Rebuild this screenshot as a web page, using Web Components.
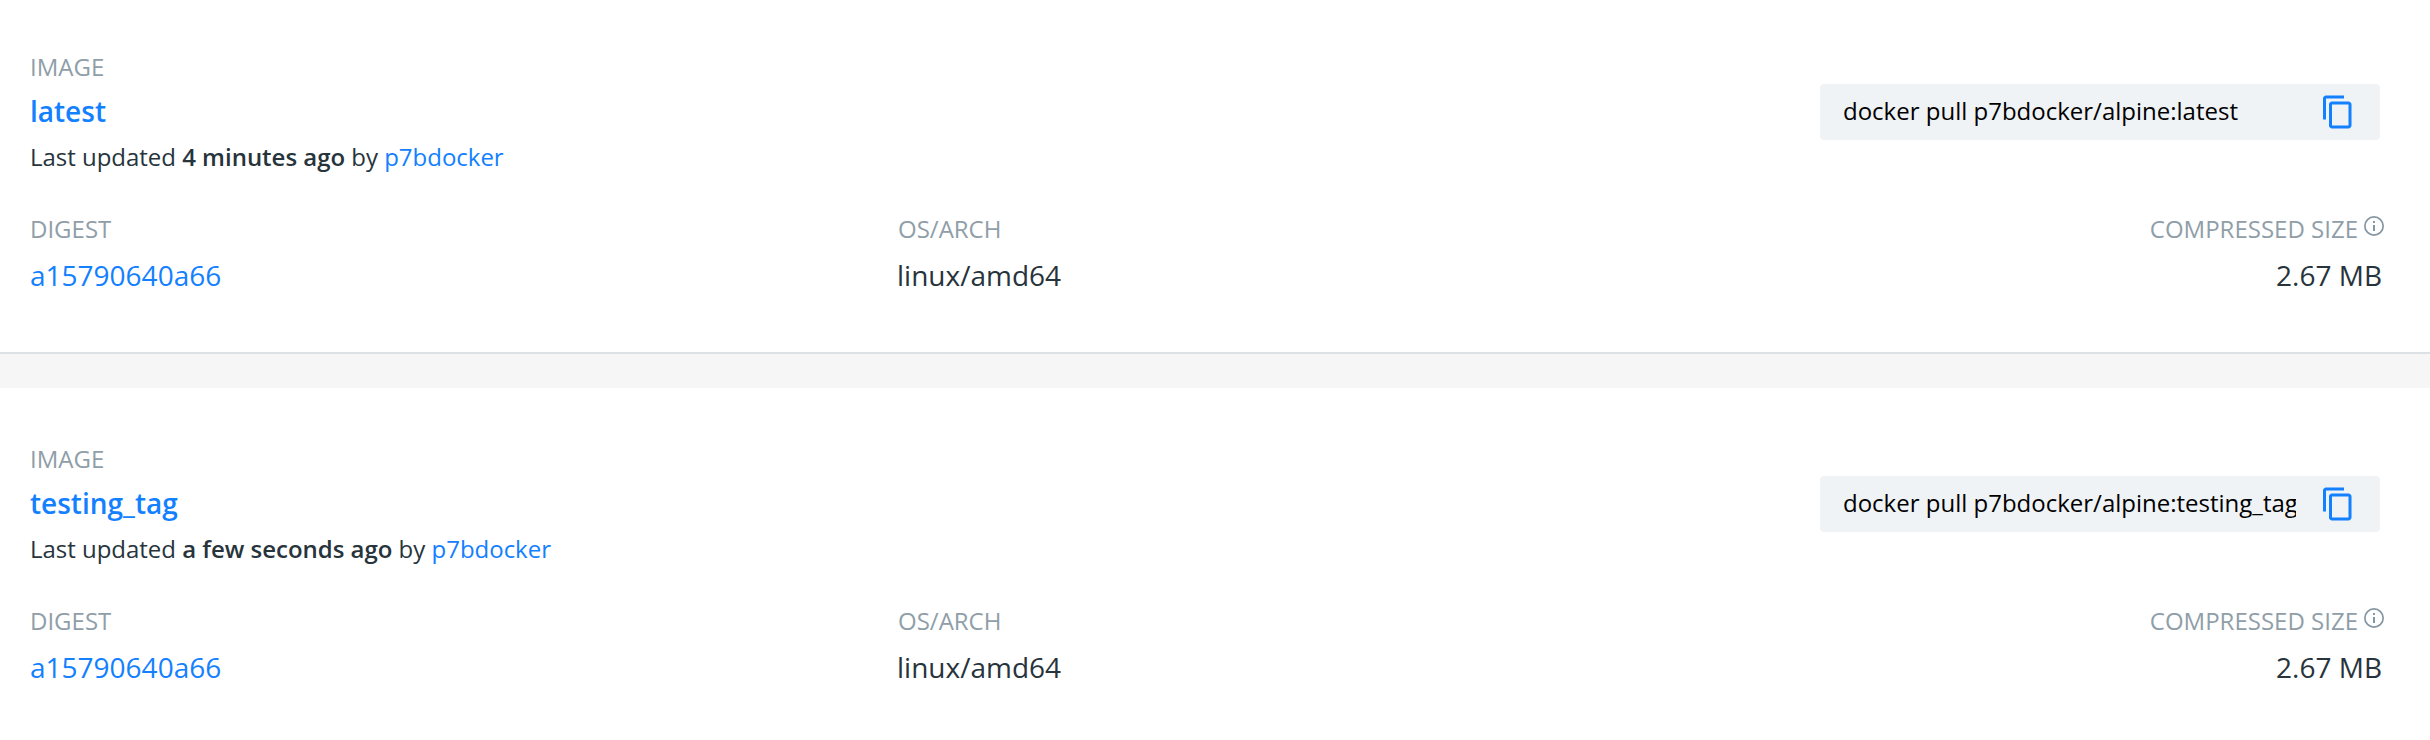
<!DOCTYPE html>
<html lang="en"><head><meta charset="utf-8"><title>Tags</title>
<style>body{margin:0;background:#fff;font-family:"Open Sans",sans-serif;color:#27343c}</style></head><body>
<tag-list></tag-list>
<template id="card"><style>
:host{display:block;background:#fff;box-sizing:border-box;height:354px;padding:49px 48px 0 30px;border-bottom:2px solid #dce1e6;color:#27343c;font-size:24px;line-height:36px}
:host([last]){border:0;height:352px;padding-top:53px}
.top{display:flex;justify-content:space-between}
.label{font-size:24px;color:#8f9ea8;line-height:36px}
.name{font-size:28px;font-weight:600;color:#1380ff;line-height:40px;margin-top:6px}
.upd{margin-top:8px;line-height:36px;letter-spacing:-.02px}
b{font-weight:600} a{color:#1380ff}
.grid{display:grid;grid-template-columns:868px 1fr auto;margin-top:36px}
.val{font-size:28px;line-height:40px;margin-top:8px}
.os{margin-left:-1px}
.r{text-align:right}
.size{display:flex}
.size svg{display:block;margin:3px -4px 0 4px}
</style>
<div class="top"><div><div class="label">IMAGE</div><div class="name"><slot name="name"></slot></div><div class="upd">Last updated <b><slot name="when"></slot></b> by <a>p7bdocker</a></div></div><pull-box><slot name="cmd"></slot></pull-box></div>
<div class="grid"><div><div class="label">DIGEST</div><div class="val"><a>a15790640a66</a></div></div><div><div class="label">OS/ARCH</div><div class="val os">linux/amd64</div></div><div class="r"><div class="label size">COMPRESSED SIZE<svg width="24" height="24" viewBox="0 0 24 24"><path fill="#8396a3" d="M11 17h2v-6h-2v6zm1-15a10 10 0 100 20 10 10 0 000-20zm0 18.3a8.3 8.3 0 110-16.6 8.3 8.3 0 010 16.6zM11 9h2V7h-2z"/></svg></div><div class="val">2.67 MB</div></div></div>
</template>
<template id="pull"><style>
:host{display:flex;box-sizing:border-box;width:560px;height:56px;margin:35px 2px 0 0;background:#eff3f6;border-radius:4px;padding:9px 23px 0;color:#000;font-size:24px;line-height:36px}
.t{width:453px;height:36px;overflow:hidden;white-space:nowrap}svg{margin:1px 0 0 24px;flex:none}
</style><div class="t"><slot></slot></div><svg width="36" height="36" viewBox="0 0 24 24"><path fill="#1380ff" d="M16 1H4c-1.1 0-2 .9-2 2v14h2V3h12V1zm3 4H8c-1.1 0-2 .9-2 2v14c0 1.1.9 2 2 2h11c1.1 0 2-.9 2-2V7c0-1.1-.9-2-2-2zm0 16H8V7h11v14z"/></svg></template>
<template id="list"><style>:host{display:flex;flex-direction:column;gap:34px;background:#f6f6f6}</style>
<tag-card><span slot="name">latest</span><span slot="when">4 minutes ago</span><span slot="cmd">docker pull p7bdocker/alpine:latest</span></tag-card>
<tag-card last><span slot="name">testing_tag</span><span slot="when">a few seconds ago</span><span slot="cmd">docker pull p7bdocker/alpine:testing_tag</span></tag-card></template>
<script>
const def=(n,t)=>customElements.define(n,class extends HTMLElement{constructor(){super();this.attachShadow({mode:'open'}).append(document.getElementById(t).content.cloneNode(true))}});
def('pull-box','pull');def('tag-card','card');def('tag-list','list');
</script></body></html>
